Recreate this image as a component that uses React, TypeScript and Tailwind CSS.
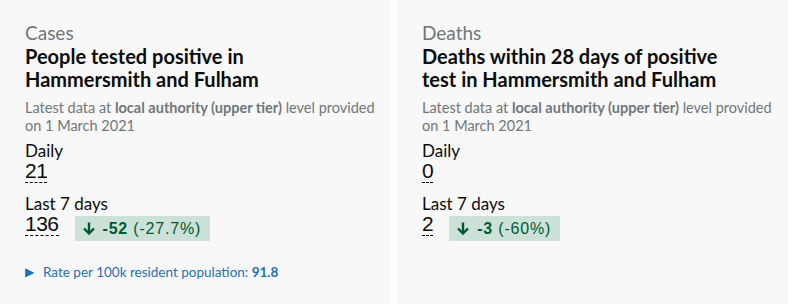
import React from 'react'

interface CardProps {
  category: string
  title: string
  daily: string
  week: string
  change: { amount: string; percent: string }
  rate?: string
}

function ArrowDown() {
  return (
    <svg width="12" height="13" viewBox="0 0 12 13" fill="none" stroke="currentColor" strokeWidth={2.4}>
      <path d="M6 0.5v11M1 6.5l5 5 5-5" />
    </svg>
  )
}

function Number({ value }: { value: string }) {
  return (
    <span className="inline-block border-b border-dashed border-black pb-[1px] font-['Liberation_Sans',sans-serif] text-[21px] leading-[21px] tracking-[-0.5px] text-[#0b0c0c]">
      {value}
    </span>
  )
}

function Card({ category, title, daily, week, change, rate }: CardProps) {
  return (
    <div className="flex-1 bg-[#f8f8f8] pl-[25px] pr-[10px] pt-[22px] font-['Lato',sans-serif] text-[#0b0c0c]">
      <p className="text-[19px] leading-[22px] text-[#6f777b]">{category}</p>
      <h2 className="mt-[1px] max-w-[320px] text-[20px] font-bold leading-[23px]">{title}</h2>
      <p className="mt-[8px] text-[14.5px] leading-[18px] text-[#6f777b]">
        Latest data at <span className="font-bold">local authority (upper tier)</span> level provided
        <br />
        on 1&nbsp;March 2021
      </p>

      <div className="mt-[6px]">
        <p className="text-[17px] leading-[19px]">Daily</p>
        <Number value={daily} />
      </div>

      <div className="mt-[10px]">
        <p className="text-[17px] leading-[19px]">Last 7 days</p>
        <div className="flex items-start gap-[16px]">
          <Number value={week} />
          <div className="mt-[3px] flex h-[25px] items-center gap-[8px] bg-[#cce2d8] pl-[8px] pr-[9px] font-['Liberation_Sans',sans-serif] text-[16px] tracking-[0.8px] text-[#005a30]">
            <ArrowDown />
            <span>
              <span className="font-bold">{change.amount}</span> ({change.percent})
            </span>
          </div>
        </div>
      </div>

      {rate && (
        <div className="mt-[21px] flex items-center gap-[9px] text-[13.5px] text-[#1d70b8]">
          <span className="text-[12px]">▶</span>
          <span>
            Rate per 100k resident population: <span className="font-bold">{rate}</span>
          </span>
        </div>
      )}
    </div>
  )
}

export default function App() {
  return (
    <div className="flex h-[304px] w-[788px] gap-[6px] bg-white">
      <Card
        category="Cases"
        title="People tested positive in Hammersmith and Fulham"
        daily="21"
        week="136"
        change={{ amount: '-52', percent: '-27.7%' }}
        rate="91.8"
      />
      <Card
        category="Deaths"
        title="Deaths within 28 days of positive test in Hammersmith and Fulham"
        daily="0"
        week="2"
        change={{ amount: '-3', percent: '-60%' }}
      />
    </div>
  )
}
